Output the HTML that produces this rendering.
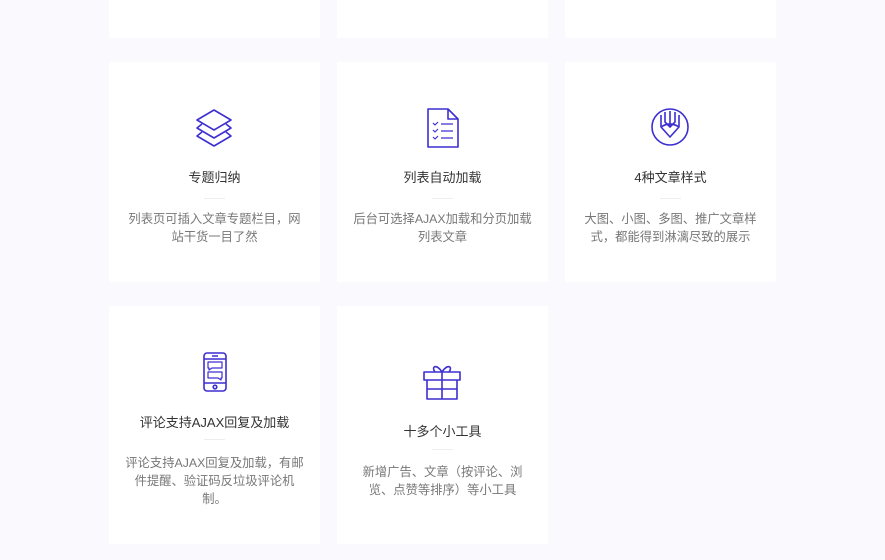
<!DOCTYPE html>
<html><head><meta charset="utf-8"><style>
body{margin:0;width:885px;height:560px;background:#f9f9fe;position:relative;overflow:hidden;font-family:"Liberation Sans","Noto Sans CJK SC",sans-serif}
.c{position:absolute;background:#fff;width:211px}
.t{position:absolute;left:0;width:100%;text-align:center;font-size:13px;color:#333}
.d{position:absolute;left:0;right:0;text-align:center;font-size:12.3px;color:#777;line-height:18px;white-space:nowrap}
.l{position:absolute;left:95px;width:21px;height:1px;background:#eee}
svg{position:absolute;fill:none;stroke:#3d2fd0;stroke-width:1.6;stroke-linejoin:round}
</style></head><body>
<div class="c" style="left:109px;top:0;height:38px"></div>
<div class="c" style="left:337px;top:0;height:38px"></div>
<div class="c" style="left:565px;top:0;height:38px"></div>

<div class="c" style="left:109px;top:62px;height:220px">
<svg style="left:85px;top:45px" width="40" height="42" viewBox="0 0 40 42"><path d="M20 3L37 13L20 23L3 13Z"/><path d="M8 17L3 21L20 31L37 21L32 17"/><path d="M8 25L3 29L20 39L37 29L32 25"/></svg>
<div class="t" style="top:105px">专题归纳</div><div class="l" style="top:136px"></div>
<div class="d" style="top:148px">列表页可插入文章专题栏目，网<br>站干货一目了然</div></div>

<div class="c" style="left:337px;top:62px;height:220px">
<svg style="left:88px;top:45px" width="36" height="42" viewBox="0 0 36 42"><path d="M3 2H23L33 12V40H3Z"/><path d="M23 2V12H33"/><path d="M8 16l2 2 3-3M8 23l2 2 3-3M8 30l2 2 3-3M16 17H28M16 24H28M16 31H28" stroke-width="1.2"/></svg>
<div class="t" style="top:105px">列表自动加载</div><div class="l" style="top:136px"></div>
<div class="d" style="top:148px">后台可选择AJAX加载和分页加载<br>列表文章</div></div>

<div class="c" style="left:565px;top:62px;height:220px">
<svg style="left:85px;top:45px" width="40" height="40" viewBox="0 0 40 40"><circle cx="20" cy="20" r="18"/><path d="M11 8V20L20 30L29 20V8"/><path d="M15 5V15L20 20L25 15V5M20 4V20"/><path d="M11 20Q20 14 29 20"/></svg>
<div class="t" style="top:105px">4种文章样式</div><div class="l" style="top:136px"></div>
<div class="d" style="top:148px">大图、小图、多图、推广文章样<br>式，都能得到淋漓尽致的展示</div></div>

<div class="c" style="left:109px;top:306px;height:238px">
<svg style="left:93px;top:45px" width="26" height="42" viewBox="0 0 26 42"><rect x="2" y="2" width="22" height="38" rx="3"/><path d="M2 8H24M2 32H24M10 5H16"/><circle cx="13" cy="36" r="1.8"/><path d="M6 11H20V17H10L7 19V17H6Z M6 21H20V27H19V29L16 27H6Z" stroke-width="1.2"/></svg>
<div class="t" style="top:106px">评论支持AJAX回复及加载</div><div class="l" style="top:133px"></div>
<div class="d" style="top:148px">评论支持AJAX回复及加载，有邮<br>件提醒、验证码反垃圾评论机<br>制。</div></div>

<div class="c" style="left:337px;top:306px;height:238px">
<svg style="left:85px;top:55px" width="40" height="40" viewBox="0 0 40 40"><path d="M2 11H38V19H2Z"/><path d="M5 19V38H35V19M20 11V38M5 28H35"/><path d="M20 11C14 2 9 6 13 11M20 11C26 2 31 6 27 11"/></svg>
<div class="t" style="top:115px">十多个小工具</div><div class="l" style="top:143px"></div>
<div class="d" style="top:157px">新增广告、文章（按评论、浏<br>览、点赞等排序）等小工具</div></div>
</body></html>
